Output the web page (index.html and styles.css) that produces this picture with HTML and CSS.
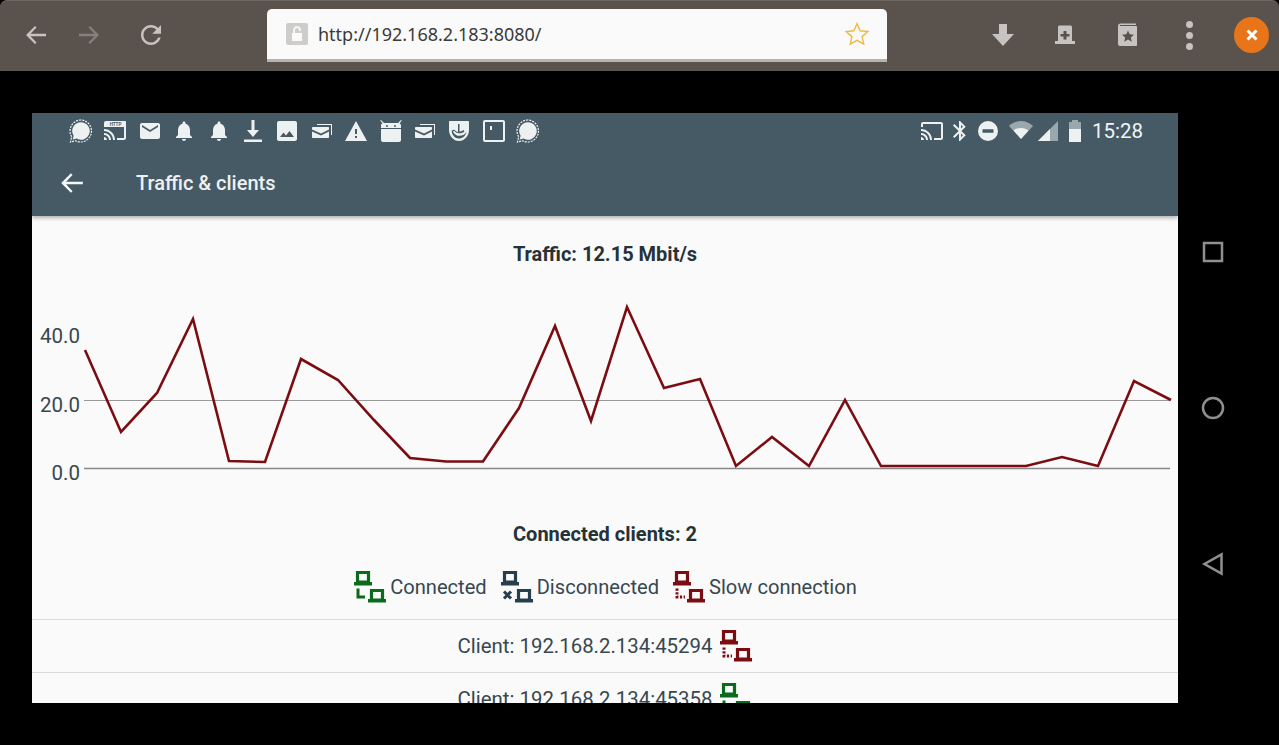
FILE: index.html
```html
<!DOCTYPE html>
<html lang="en">
<head>
    <meta charset="UTF-8">
    <meta name="viewport" content="width=device-width, initial-scale=1.0">
    <title>Traffic &amp; clients</title>
    <link rel="stylesheet" href="styles.css">
</head>
<body>

<svg class="defs" width="0" height="0">
    <symbol id="i-signal" viewBox="0 0 24 24">
        <path d="M12 3.2a8.800 8.800 0 0 0-7.400 13.500L3.700 20.500l3.800-.9A8.800 8.800 0 1 0 12 3.200z"/>
        <path class="ring" d="M12 1a11 11 0 0 0-9.300 16.800L1.500 23l5-1.200A11 11 0 1 0 12 1z"/>
    </symbol>
    <symbol id="i-cast" viewBox="0 0 24 24">
        <path d="M21 3H3c-1.100 0-2 .9-2 2v3h2V5h18v14h-7v2h7c1.100 0 2-.9 2-2V5c0-1.100-.9-2-2-2zM1 18v3h3c0-1.660-1.340-3-3-3zm0-4v2c2.760 0 5 2.240 5 5h2c0-3.870-3.130-7-7-7zm0-4v2c4.970 0 9 4.030 9 9h2c0-6.080-4.930-11-11-11z"/>
    </symbol>
    <symbol id="i-mail" viewBox="0 0 24 24">
        <path d="M20 4H4c-1.100 0-2 .9-2 2v12c0 1.100.9 2 2 2h16c1.100 0 2-.9 2-2V6c0-1.100-.9-2-2-2zm0 4l-8 5-8-5V6l8 5 8-5v2z"/>
    </symbol>
    <symbol id="i-bell" viewBox="0 0 24 24">
        <path d="M12 22c1.100 0 2-.9 2-2h-4c0 1.100.89 2 2 2zm6-6v-5c0-3.070-1.640-5.640-4.500-6.320V4c0-.83-.67-1.500-1.500-1.500s-1.500.67-1.500 1.500v.68C7.630 5.360 6 7.920 6 11v5l-2 2v1h16v-1l-2-2z"/>
    </symbol>
    <symbol id="i-download" viewBox="0 0 24 24">
        <path d="M10.500 1h3v10h4.500l-6 7-6-7h4.500zM3 20.500h18V23H3z"/>
    </symbol>
    <symbol id="i-image" viewBox="0 0 24 24">
        <path d="M22 20V4c0-1.100-.9-2-2-2H4c-1.100 0-2 .9-2 2v16c0 1.100.9 2 2 2h16c1.100 0 2-.9 2-2zM8.500 13.500l2.500 3 3.500-4.500 4.500 6H5l3.500-4.500z"/>
    </symbol>
    <symbol id="i-mails" viewBox="0 0 24 24">
        <path d="M7 5h15v11h-1V6H7z"/>
        <path d="M3 8h15c.6 0 1 .4 1 1v1.500l-8 4-9-4V9c0-.6.4-1 1-1zM2 12.500l9 4 8-4V18c0 .6-.4 1-1 1H3c-.6 0-1-.4-1-1z"/>
    </symbol>
    <symbol id="i-warning" viewBox="0 0 24 24">
        <path d="M1 22h22L12 2 1 22zm12-3h-2v-2h2v2zm0-4h-2v-5h2v5z"/>
    </symbol>
    <symbol id="i-android" viewBox="0 0 24 24">
        <path fill-rule="evenodd" d="M2 1l3 3h14l3-3 .8.6L20.500 4.500c.9.300 1.500 1 1.500 2V9H2V6.500c0-1 .6-1.700 1.500-2L1.200 1.600zM8 6a1 1 0 1 0 0 2 1 1 0 0 0 0-2zm8 0a1 1 0 1 0 0 2 1 1 0 0 0 0-2z"/>
        <path d="M2 10h20v11c0 1.100-.9 2-2 2H4c-1.100 0-2-.9-2-2z"/>
    </symbol>
    <symbol id="i-shield" viewBox="0 0 24 24">
        <path fill-rule="evenodd" d="M3 2h18c.6 0 1 .4 1 1v8c0 6-4.500 11-10 11S2 17 2 11V3c0-.6.4-1 1-1zm9.500 3v7.500c1.800 0 3-.6 3.800-1.500l1.200 1.200c-1.200 1.300-3 2.100-5.500 2.100-1.500 0-3.500-.7-4.600-2.500L6 12.400c1.300 3 3.800 4.400 6.500 4.400 3.300 0 5.600-1.500 7-3.800-1 4-3.800 6.500-7.500 6.500-4 0-7.300-3.300-7.300-8 0 0 2-1.500 3-.5 1 1.200 2.200 2 3.300 2V5z"/>
    </symbol>
    <symbol id="i-frame" viewBox="0 0 24 24">
        <path fill-rule="evenodd" d="M3 1h18c1.100 0 2 .9 2 2v18c0 1.100-.9 2-2 2H3c-1.100 0-2-.9-2-2V3c0-1.100.9-2 2-2zm0 2v18h18V3zm5 4h2v4H8z"/>
    </symbol>
    <symbol id="i-bluetooth" viewBox="0 0 24 24">
        <path d="M17.710 7.710L12 2h-1v7.590L6.410 5 5 6.410 10.590 12 5 17.590 6.410 19 11 14.410V22h1l5.710-5.710-4.300-4.290 4.300-4.290zM13 5.830l1.880 1.880L13 9.590V5.830zm1.880 10.460L13 18.170v-3.760l1.880 1.880z"/>
    </symbol>
    <symbol id="i-dnd" viewBox="0 0 24 24">
        <path fill-rule="evenodd" d="M12 2a10 10 0 1 0 0 20 10 10 0 0 0 0-20zM6.500 10.200h11v3.600h-11z"/>
    </symbol>
    <symbol id="i-wifi" viewBox="0 0 24 24">
        <path class="dim" d="M12 20L0 7c3-3 7.500-5 12-5s9 2 12 5z"/>
        <path d="M12 20L4.500 11.500C6.500 10 9 9 12 9s5.500 1 7.500 2.500z"/>
    </symbol>
    <symbol id="i-cell" viewBox="0 0 24 24">
        <path class="dim" d="M22 2v20H2z"/>
        <path d="M14 10v12H2z"/>
    </symbol>
    <symbol id="i-battery" viewBox="0 0 24 24">
        <path class="dim" d="M9 1h6v2h3v8H6V3h3z"/>
        <path d="M6 10h12v13H6z"/>
    </symbol>
    <symbol id="i-arrow" viewBox="0 0 24 24">
        <path d="M22 10.800H6.500l6-6.300L11 3 2 12l9 9 1.500-1.500-6-6.300H22z"/>
    </symbol>
    <symbol id="i-reload" viewBox="0 0 24 24">
        <path d="M17.650 6.350C16.200 4.900 14.210 4 12 4c-4.420 0-7.990 3.580-7.990 8s3.570 8 7.990 8c3.730 0 6.840-2.550 7.730-6h-2.080c-.82 2.330-3.040 4-5.650 4-3.310 0-6-2.690-6-6s2.690-6 6-6c1.660 0 3.140.69 4.220 1.780L13 11h7V4l-2.350 2.350z"/>
    </symbol>
    <symbol id="i-connected" viewBox="0 0 32 32">
        <path class="screen" d="M3.500 1.500h11V11h-11zM17.500 19.500h11V29h-11z"/>
        <path class="base" d="M0 11h18v3.500H0zM14 28h18v3.500H14z"/>
        <path class="link" d="M4 17.500V26h7"/>
    </symbol>
    <symbol id="i-disconnected" viewBox="0 0 32 32">
        <path class="screen" d="M3.500 1.500h11V11h-11zM17.500 19.500h11V29h-11z"/>
        <path class="base" d="M0 11h18v3.500H0zM14 28h18v3.500H14z"/>
        <path class="link" d="M3 20.500l7 7M10 20.500l-7 7"/>
    </symbol>
    <symbol id="i-slow" viewBox="0 0 32 32">
        <path class="screen" d="M3.500 1.500h11V11h-11zM17.500 19.500h11V29h-11z"/>
        <path class="base" d="M0 11h18v3.500H0zM14 28h18v3.500H14z"/>
        <path class="link dotted" d="M4 17.500V26h8"/>
    </symbol>
</svg>

<header class="browser-bar">
    <div class="bar-left">
        <svg class="bar-icon"><use href="#i-arrow"/></svg>
        <svg class="bar-icon faded flip"><use href="#i-arrow"/></svg>
        <svg class="bar-icon reload"><use href="#i-reload"/></svg>
    </div>
    <div class="address">
        <span class="lock">
            <svg viewBox="0 0 22 22"><path class="lock-shape" d="M6 10h10v8H6zM7.200 10V7a3.800 3.800 0 0 1 7.600 0v1h-1.800V7a2 2 0 0 0-4 0v3z"/></svg>
        </span>
        <span class="url">http://192.168.2.183:8080/</span>
        <svg class="star" viewBox="0 0 24 24"><path d="M12 2.500l2.900 6.500 7.100.7-5.300 4.700 1.500 7L12 17.800l-6.200 3.600 1.500-7L2 9.700 9.100 9z"/></svg>
    </div>
    <div class="bar-right">
        <svg class="bar-icon" viewBox="0 0 24 24"><path d="M8 1h8v10h7L12 23 1 11h7z"/></svg>
        <svg class="bar-icon" viewBox="0 0 24 24"><path fill-rule="evenodd" d="M5 4c0-1 .8-1.500 1.500-1.500h11c.7 0 1.500.5 1.500 1.500v14h3v3H2v-3h3zm5.500 4v3h-3v2.500h3v3H13.500v-3h3V11h-3V8z"/></svg>
        <svg class="bar-icon" viewBox="0 0 24 24"><path fill-rule="evenodd" d="M3 3c0-1.500 1-2.500 2.500-2.500H21v1.500H5.500C5 2 4.500 2.500 5 3h16c.6 0 1 .4 1 1v18c0 .6-.4 1-1 1H5c-1.100 0-2-.9-2-2zm10 4.500l-1.700 3.800-4.300.4 3.200 2.800-1 4.200 3.800-2.200 3.800 2.200-1-4.200 3.200-2.800-4.300-.4z"/></svg>
        <span class="dots"><i></i><i></i><i></i></span>
        <span class="close">
            <svg viewBox="0 0 16 16"><path d="M3.500 3.500l9 9M12.500 3.500l-9 9"/></svg>
        </span>
    </div>
</header>

<div class="stage">
    <main class="phone">
        <div class="app-head">
            <div class="status-bar">
                <div class="notifications">
                    <svg class="st"><use href="#i-signal"/></svg>
                    <svg class="st" viewBox="0 0 24 24">
                        <path d="M1 21v-3c1.660 0 3 1.340 3 3zm0-7v2c2.760 0 5 2.240 5 5h2c0-3.870-3.130-7-7-7zm0-4v2c4.970 0 9 4.030 9 9h2c0-6.080-4.930-11-11-11zM21 8h2v11c0 1.100-.9 2-2 2h-7v-2h7z"/>
                        <path d="M3 2h19c.6 0 1 .4 1 1v5H1V4c0-1.100.9-2 2-2z"/>
                        <text class="http" x="12.500" y="7">HTTP</text>
                    </svg>
                    <svg class="st"><use href="#i-mail"/></svg>
                    <svg class="st"><use href="#i-bell"/></svg>
                    <svg class="st"><use href="#i-bell"/></svg>
                    <svg class="st"><use href="#i-download"/></svg>
                    <svg class="st"><use href="#i-image"/></svg>
                    <svg class="st"><use href="#i-mails"/></svg>
                    <svg class="st"><use href="#i-warning"/></svg>
                    <svg class="st"><use href="#i-android"/></svg>
                    <svg class="st"><use href="#i-mails"/></svg>
                    <svg class="st"><use href="#i-shield"/></svg>
                    <svg class="st"><use href="#i-frame"/></svg>
                    <svg class="st"><use href="#i-signal"/></svg>
                </div>
                <div class="system">
                    <svg class="st"><use href="#i-cast"/></svg>
                    <svg class="st narrow"><use href="#i-bluetooth"/></svg>
                    <svg class="st narrow"><use href="#i-dnd"/></svg>
                    <svg class="st wifi"><use href="#i-wifi"/></svg>
                    <svg class="st small"><use href="#i-cell"/></svg>
                    <svg class="st small"><use href="#i-battery"/></svg>
                    <span class="clock">15:28</span>
                </div>
            </div>
            <div class="toolbar">
                <svg class="back"><use href="#i-arrow"/></svg>
                <h1>Traffic &amp; clients</h1>
            </div>
        </div>

        <h2>Traffic: 12.15 Mbit/s</h2>
        <svg class="chart" viewBox="32 266 1146 256">
            <line class="grid" x1="84" y1="400.500" x2="1170" y2="400.500"/>
            <line class="grid base-line" x1="84" y1="468.500" x2="1170" y2="468.500"/>
            <text x="80" y="343">40.0</text>
            <text x="80" y="412">20.0</text>
            <text x="80" y="480">0.0</text>
            <polyline class="series" points="85,350 121,432 157,393 193,319 229,461 265,462 301,359 338,380 374,420 410,458 446,461.500 483,461.500 519,408 555,326 591,421 627,307 664,388 700,379 736,466 772,437 809,466 845,400 881,466 917,466 953,466 990,466 1026,466 1062,457 1098,466 1134,381 1171,400"/>
        </svg>

        <h2>Connected clients: 2</h2>
        <div class="legend">
            <span class="legend-item"><svg class="net good"><use href="#i-connected"/></svg>Connected</span>
            <span class="legend-item"><svg class="net off"><use href="#i-disconnected"/></svg>Disconnected</span>
            <span class="legend-item"><svg class="net slow"><use href="#i-slow"/></svg>Slow connection</span>
        </div>

        <ul class="clients">
            <li>Client: 192.168.2.134:45294 <svg class="net slow"><use href="#i-slow"/></svg></li>
            <li>Client: 192.168.2.134:45358 <svg class="net good"><use href="#i-connected"/></svg></li>
        </ul>
    </main>

    <nav class="android-nav">
        <svg viewBox="0 0 24 24"><path d="M3 3h18v18H3z"/></svg>
        <svg viewBox="0 0 24 24"><circle cx="12" cy="12" r="10"/></svg>
        <svg viewBox="0 0 24 24"><path d="M20.500 2.500v19L3.500 12z"/></svg>
    </nav>
</div>

</body>
</html>
```

FILE: styles.css
```css
html, body {
    margin: 0;
    padding: 0;
    height: 745px;
    overflow: hidden;
    background-color: #000;
    font-family: Roboto, "Liberation Sans", sans-serif;
}

.defs {
    position: absolute;
}

/* browser chrome */
.browser-bar {
    display: flex;
    height: 70px;
    background-color: #5a524c;
    border-top: 1px solid #6e6761;
    border-radius: 7px 7px 0 0;
}

.bar-left {
    display: flex;
    align-items: center;
    width: 267px;
    height: 68px;
    padding-left: 24px;
    box-sizing: border-box;
    gap: 29px;
}

.bar-icon {
    width: 24px;
    height: 24px;
    fill: #c6c3c0;
}

.bar-icon.faded {
    fill: #85807b;
}

.bar-icon.flip {
    transform: scaleX(-1);
}

.bar-icon.reload {
    width: 30px;
    height: 30px;
    margin-left: 6px;
}

.address {
    display: flex;
    align-items: center;
    width: 620px;
    height: 53px;
    margin-top: 8px;
    background-color: #fafafa;
    border-bottom: 3px solid #b5b3b0;
    border-radius: 5px 5px 0 0;
    box-sizing: border-box;
}

.lock {
    display: flex;
    width: 22px;
    height: 22px;
    margin-left: 19px;
    background-color: #cfcdcb;
    border-radius: 2px;
}

.lock-shape {
    fill: #fafafa;
}

.url {
    margin-left: 10px;
    flex: 1;
    font-family: "Noto Sans", sans-serif;
    font-size: 18px;
    color: #3a3a3a;
}

.star {
    width: 26px;
    height: 26px;
    margin-right: 17px;
    fill: none;
    stroke: #efb944;
    stroke-width: 1.300;
}

.bar-right {
    display: flex;
    align-items: center;
    flex: 1;
    height: 68px;
    padding-left: 104px;
    box-sizing: border-box;
}

.bar-right .bar-icon {
    margin-right: 38px;
}

.dots {
    display: flex;
    flex-direction: column;
    gap: 4px;
    margin-left: 9px;
}

.dots i {
    width: 7px;
    height: 7px;
    border-radius: 50%;
    background-color: #c6c3c0;
}

.close {
    display: flex;
    align-items: center;
    justify-content: center;
    width: 35px;
    height: 36px;
    margin-left: 41px;
    border-radius: 50%;
    background-color: #e8751a;
}

.close svg {
    width: 16px;
    height: 16px;
    fill: none;
    stroke: #fff;
    stroke-width: 3;
}

/* device */
.stage {
    display: flex;
    padding: 42px 0 0 32px;
}

.phone {
    width: 1146px;
    height: 590px;
    overflow: hidden;
    background-color: #fafafa;
}

.app-head {
    background-color: #455a64;
    box-shadow: 0 2px 4px rgba(0, 0, 0, 0.3);
}

.status-bar {
    display: flex;
    justify-content: space-between;
    align-items: center;
    height: 36px;
    padding: 0 35px 0 37px;
}

.notifications {
    display: flex;
    gap: 10.400px;
}

.system {
    display: flex;
    align-items: center;
}

.st {
    width: 24px;
    height: 24px;
    fill: #eef1f2;
}

.st.narrow {
    margin-left: 4px;
}

.st.wifi {
    margin-left: 9px;
}

.st.small {
    margin-left: 3px;
}

.ring {
    fill: none;
    stroke: #eef1f2;
    stroke-width: 1.200;
    stroke-dasharray: 2 1;
}

.http {
    font-family: Roboto, sans-serif;
    font-size: 4.500px;
    font-weight: 700;
    text-anchor: middle;
    fill: #455a64;
}

.dim {
    fill: #9aa7ad;
}

.clock {
    margin-left: 5px;
    font-size: 20.500px;
    color: #f2f4f5;
}

.toolbar {
    display: flex;
    align-items: center;
    height: 67px;
}

.back {
    width: 26px;
    height: 26px;
    margin-left: 27px;
    fill: #f5f6f7;
}

.toolbar h1 {
    margin: 0 0 0 51px;
    font-size: 20px;
    font-weight: 500;
    color: #eef1f2;
}

h2 {
    margin: 0;
    font-size: 20px;
    font-weight: 700;
    line-height: 24px;
    text-align: center;
    color: #263238;
}

.phone > h2:first-of-type {
    padding-top: 26px;
}

.chart {
    display: block;
    width: 1146px;
    height: 256px;
}

.chart text {
    font-size: 20.500px;
    text-anchor: end;
    fill: #37474f;
}

.grid {
    stroke: #999;
    stroke-width: 1;
}

.grid.base-line {
    stroke: #888;
    stroke-width: 1.500;
}

.series {
    fill: none;
    stroke: #7b0d12;
    stroke-width: 2.600;
}

.legend {
    display: flex;
    justify-content: center;
    gap: 14px;
    margin-top: 25px;
    padding-left: 1px;
    height: 48px;
}

.legend-item {
    display: flex;
    align-items: flex-start;
    gap: 4px;
    font-size: 20.100px;
    line-height: 32px;
    color: #37474f;
}

.net {
    flex: none;
    width: 32px;
    height: 32px;
}

.screen {
    fill: none;
    stroke: currentColor;
    stroke-width: 3.200;
}

.base {
    fill: currentColor;
}

.link {
    fill: none;
    stroke: currentColor;
    stroke-width: 3;
}

.link.dotted {
    stroke-dasharray: 2.200 1.600;
}

.good {
    color: #0b6b1d;
}

.off {
    color: #263f4d;
}

.slow {
    color: #7b0d12;
}

.clients {
    margin: 0;
    padding: 0;
    list-style: none;
    border-top: 1px solid #cfdcec;
}

.clients li {
    display: flex;
    justify-content: center;
    gap: 8px;
    height: 53px;
    padding-top: 10px;
    box-sizing: border-box;
    border-bottom: 1px solid #d5d9dc;
    font-size: 20.400px;
    line-height: 32px;
    color: #37474f;
}

.android-nav {
    display: flex;
    flex-direction: column;
    align-items: center;
    width: 70px;
    padding-top: 127px;
    gap: 132px;
}

.android-nav svg {
    width: 24px;
    height: 24px;
    fill: none;
    stroke: #8f8f8f;
    stroke-width: 2.500;
}
```
